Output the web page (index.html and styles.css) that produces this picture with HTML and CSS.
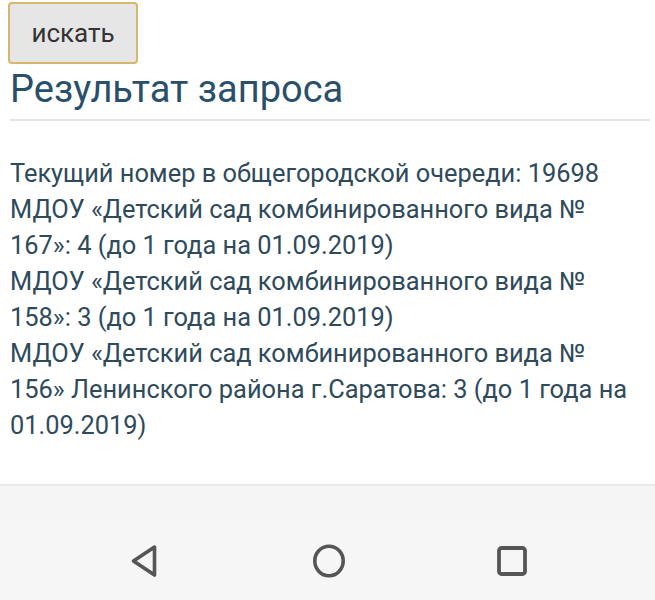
FILE: index.html
```html
<!DOCTYPE html>
<html lang="ru">
<head>
<meta charset="utf-8">
<link rel="stylesheet" href="styles.css">
</head>
<body>
<div class="page">
  <main class="content">
    <button class="search-btn">искать</button>
    <h2 class="title">Результат запроса</h2>
    <div class="result">
      Текущий номер в общегородской очереди: 19698<br>
      МДОУ «Детский сад комбинированного вида № 167»: 4 (до 1 года на 01.09.2019)<br>
      МДОУ «Детский сад комбинированного вида № 158»: 3 (до 1 года на 01.09.2019)<br>
      МДОУ «Детский сад комбинированного вида № 156» Ленинского района г.Саратова: 3 (до 1 года на 01.09.2019)
    </div>
  </main>
  <div class="footer-strip"></div>
  <nav class="navbar">
    <span class="nav-slot"><svg width="40" height="40" viewBox="0 0 40 40"><path d="M28.5 6 L7.5 20 L28.5 34 Z" fill="none" stroke="#555" stroke-width="3.6" stroke-linejoin="round"/></svg></span>
    <span class="nav-slot"><svg width="40" height="40" viewBox="0 0 40 40"><ellipse cx="20" cy="20" rx="14.2" ry="14.7" fill="none" stroke="#555" stroke-width="3.6"/></svg></span>
    <span class="nav-slot"><svg width="40" height="40" viewBox="0 0 40 40"><rect x="7" y="7" width="26" height="26" rx="2.5" fill="none" stroke="#555" stroke-width="3.8"/></svg></span>
  </nav>
</div>
</body>
</html>
```
FILE: styles.css
```css
html, body {
  margin: 0;
  padding: 0;
  background: #fff;
}
.page {
  width: 655px;
  height: 600px;
  display: flex;
  flex-direction: column;
  font-family: Roboto, "Noto Sans", sans-serif;
  overflow: hidden;
}
.content {
  flex: 1;
  padding: 2px 5px 0 10px;
  border-bottom: 2px solid #e8e8e8;
}
.search-btn {
  display: block;
  margin-left: -2px;
  width: 130px;
  height: 62px;
  background: #e6e6e6;
  border: 2px solid #d6b76c;
  border-radius: 4px;
  font-family: Roboto, sans-serif;
  font-size: 26px;
  color: #333;
  padding: 0;
}
.title {
  margin: 3px 0 0 0;
  font-weight: 400;
  font-size: 38px;
  line-height: 44px;
  color: #2a4f6a;
  padding-bottom: 8px;
  border-bottom: 2px solid #e5e5e5;
}
.result {
  width: 622px;
  margin-top: 34px;
  font-size: 25.4px;
  line-height: 36px;
  color: #2e4a5b;
}
.footer-strip {
  height: 36px;
  background: #f5f5f5;
}
.navbar {
  height: 78px;
  background: #f6f6f6;
  display: flex;
  align-items: center;
  justify-content: center;
  gap: 143px;
  padding-left: 3px;
}
.nav-slot { display: block; width: 40px; height: 40px; }
.nav-slot svg { display: block; }
```
